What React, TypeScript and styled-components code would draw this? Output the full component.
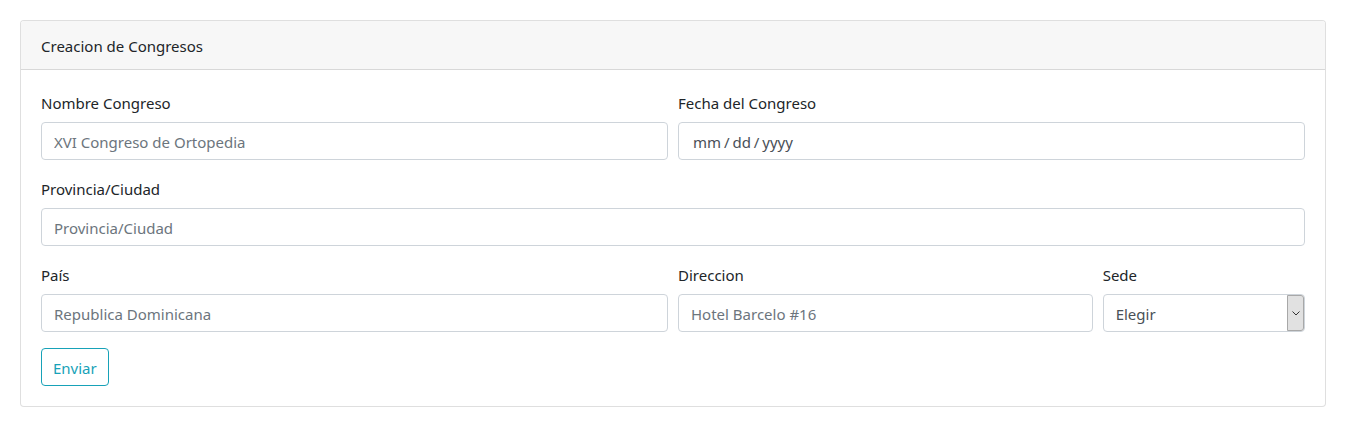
import React from "react";
import styled, { createGlobalStyle } from "styled-components";

const Global = createGlobalStyle`
  * { box-sizing: border-box; }
  body {
    margin: 0;
    background: #fff;
    font-family: "Noto Sans", "Open Sans", sans-serif;
    font-size: 16px;
    line-height: 24px;
    color: #212529;
  }
`;

const Page = styled.div`
  padding: 20px;
`;

const Card = styled.div`
  border: 1px solid rgba(0, 0, 0, 0.125);
  border-radius: 4px;
  background: #fff;
  overflow: hidden;
`;

const CardHeader = styled.div`
  padding: 13px 20px 11px;
  background: #f7f7f7;
  border-bottom: 1px solid rgba(0, 0, 0, 0.125);
  font-size: 15px;
`;

const CardBody = styled.form`
  padding: 20px;
`;

const Row = styled.div<{ $cols: string }>`
  display: grid;
  grid-template-columns: ${(p) => p.$cols};
  column-gap: 10px;
  margin-bottom: 16px;
`;

const Group = styled.div`
  display: flex;
  flex-direction: column;
  min-width: 0;
`;

const Label = styled.label`
  font-size: 15px;
  line-height: 24px;
  padding-top: 1px;
  margin-bottom: 7px;
`;

const fieldBase = `
  height: 38px;
  width: 100%;
  padding: 7px 12px 5px;
  border: 1px solid #ced4da;
  border-radius: 4px;
  font-family: inherit;
  font-size: 15px;
  line-height: 24px;
  color: #495057;
  background: #fff;
  outline: none;
`;

const Input = styled.input`
  ${fieldBase}
  &::placeholder {
    color: #6c757d;
  }
`;

const FakeDate = styled.div`
  ${fieldBase}
  padding-left: 14px;
  word-spacing: -1px;
`;

const SelectWrap = styled.div`
  position: relative;
  height: 38px;
`;

const Select = styled.select`
  ${fieldBase}
  appearance: none;
`;

const Arrow = styled.span`
  position: absolute;
  top: 1px;
  right: 1px;
  bottom: 1px;
  width: 17px;
  background: #e1e1e1;
  border: 1px solid #a8a8a8;
  border-radius: 0 3px 3px 0;
  display: flex;
  align-items: center;
  justify-content: center;
  pointer-events: none;
`;

const Button = styled.button`
  height: 38px;
  padding: 7px 11px 5px;
  border: 1px solid #17a2b8;
  border-radius: 4px;
  background: transparent;
  color: #17a2b8;
  font-family: inherit;
  font-size: 15px;
  line-height: 24px;
`;

const THIRDS = "calc((100% + 10px) / 2 - 10px) calc((100% + 10px) / 3 - 10px) 1fr";

export default function App() {
  return (
    <>
      <Global />
      <Page>
        <Card>
          <CardHeader>Creacion de Congresos</CardHeader>
          <CardBody onSubmit={(e) => e.preventDefault()}>
            <Row $cols="1fr 1fr">
              <Group>
                <Label>Nombre Congreso</Label>
                <Input placeholder="XVI Congreso de Ortopedia" />
              </Group>
              <Group>
                <Label>Fecha del Congreso</Label>
                <FakeDate>mm / dd / yyyy</FakeDate>
              </Group>
            </Row>
            <Row $cols="1fr">
              <Group>
                <Label>Provincia/Ciudad</Label>
                <Input placeholder="Provincia/Ciudad" />
              </Group>
            </Row>
            <Row $cols={THIRDS}>
              <Group>
                <Label>País</Label>
                <Input placeholder="Republica Dominicana" />
              </Group>
              <Group>
                <Label>Direccion</Label>
                <Input placeholder="Hotel Barcelo #16" />
              </Group>
              <Group>
                <Label>Sede</Label>
                <SelectWrap>
                  <Select defaultValue="">
                    <option value="">Elegir</option>
                  </Select>
                  <Arrow>
                    <svg width="8" height="5" viewBox="0 0 8 5">
                      <path d="M0.5 0.5 L4 4 L7.5 0.5" fill="none" stroke="#333" strokeWidth="1" />
                    </svg>
                  </Arrow>
                </SelectWrap>
              </Group>
            </Row>
            <Button type="submit">Enviar</Button>
          </CardBody>
        </Card>
      </Page>
    </>
  );
}
